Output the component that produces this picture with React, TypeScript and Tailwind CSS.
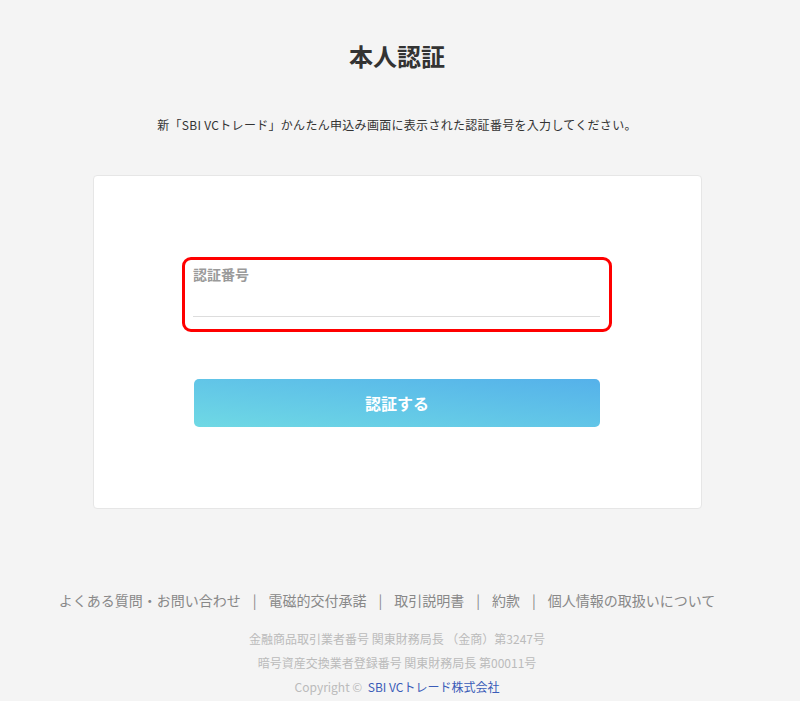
export default function App() {
  const links = ['よくある質問・お問い合わせ', '電磁的交付承諾', '取引説明書', '約款', '個人情報の取扱いについて'];

  return (
    <div className="min-h-screen bg-[#f4f4f4] font-['Noto_Sans_CJK_JP',sans-serif]">
      <div className="w-[794px] flex flex-col items-center">
        <h1 className="pt-[42px] text-[24px] leading-[28px] font-bold text-[#333]">本人認証</h1>
        <p className="mt-[46px] text-[12px] leading-[18px] text-[#333] tracking-[0.3px]">
          新「SBI VCトレード」かんたん申込み画面に表示された認証番号を入力してください。
        </p>

        <div className="mt-[41px] w-[609px] bg-white border border-[#e6e6e6] rounded-[4px] pt-[81px] pb-[81px] flex flex-col items-center">
          {/* input field, highlighted */}
          <div className="w-[430px] h-[75px] border-[3px] border-[#ff0000] rounded-[9px] pl-[8px] pr-[9px] pt-[5px]">
            <label className="block text-[14px] leading-[18px] font-bold text-[#9a9a9a]">認証番号</label>
            <input
              type="text"
              className="mt-[33px] block w-full border-b border-[#dddddd] bg-transparent outline-none text-[14px] h-[1px]"
            />
          </div>

          <button className="mt-[47px] w-[406px] h-[48px] rounded-[5px] bg-linear-to-tr from-[#6fd9e4] to-[#55b1ea] text-white text-[16px] font-bold">
            認証する
          </button>
        </div>

        <div className="mt-[81px] pr-[20px] flex items-center text-[14px] leading-[20px] text-[#888]">
          {links.map((l, i) => (
            <span key={l} className="flex items-center">
              {i > 0 && <span className="mx-[12px]">|</span>}
              <a href="#">{l}</a>
            </span>
          ))}
        </div>

        <div className="mt-[17px] flex flex-col items-center text-[12px] leading-[24px] text-[#bbbbbb]">
          <p>金融商品取引業者番号 関東財務局長 （金商）第3247号</p>
          <p>暗号資産交換業者登録番号 関東財務局長 第00011号</p>
          <p>
            Copyright ©&nbsp; <a href="#" className="text-[#3a5cb8]">SBI VCトレード株式会社</a>
          </p>
        </div>
      </div>
    </div>
  );
}
